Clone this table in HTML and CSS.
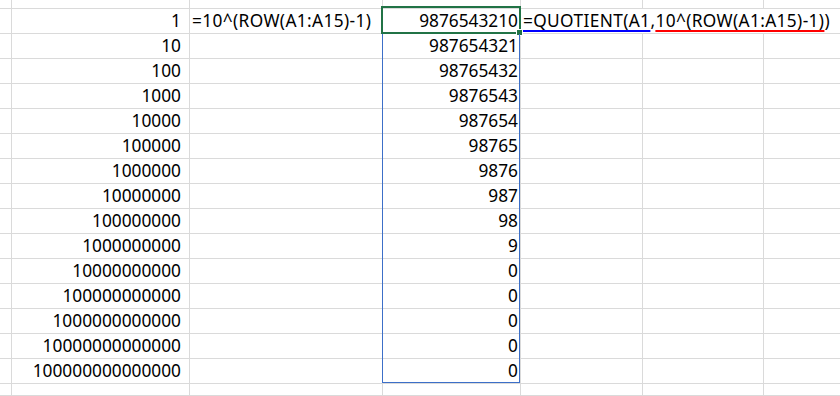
FILE: index.html
```html
<!DOCTYPE html>
<html>
<head>
<meta charset="utf-8">
<link rel="stylesheet" href="styles.css">
</head>
<body>
<div class="sheet">
  <div class="grid">
    <div class="c"></div><div class="c"></div><div class="c"></div><div class="c"></div><div class="c"></div><div class="c"></div><div class="c last"></div>

    <div class="c"></div><div class="c num">1</div><div class="c txt">=10^(ROW(A1:A15)-1)</div><div class="c res">9876543210</div><div class="c txt span3"><span class="ul-blue">=QUOTIENT(A1</span>,<span class="ul-red">10^(ROW(A1:A15)-1)</span>)</div>

    <div class="c"></div><div class="c num">10</div><div class="c"></div><div class="c res">987654321</div><div class="c"></div><div class="c"></div><div class="c last"></div>
    <div class="c"></div><div class="c num">100</div><div class="c"></div><div class="c res">98765432</div><div class="c"></div><div class="c"></div><div class="c last"></div>
    <div class="c"></div><div class="c num">1000</div><div class="c"></div><div class="c res">9876543</div><div class="c"></div><div class="c"></div><div class="c last"></div>
    <div class="c"></div><div class="c num">10000</div><div class="c"></div><div class="c res">987654</div><div class="c"></div><div class="c"></div><div class="c last"></div>
    <div class="c"></div><div class="c num">100000</div><div class="c"></div><div class="c res">98765</div><div class="c"></div><div class="c"></div><div class="c last"></div>
    <div class="c"></div><div class="c num">1000000</div><div class="c"></div><div class="c res">9876</div><div class="c"></div><div class="c"></div><div class="c last"></div>
    <div class="c"></div><div class="c num">10000000</div><div class="c"></div><div class="c res">987</div><div class="c"></div><div class="c"></div><div class="c last"></div>
    <div class="c"></div><div class="c num">100000000</div><div class="c"></div><div class="c res">98</div><div class="c"></div><div class="c"></div><div class="c last"></div>
    <div class="c"></div><div class="c num">1000000000</div><div class="c"></div><div class="c res">9</div><div class="c"></div><div class="c"></div><div class="c last"></div>
    <div class="c"></div><div class="c num">10000000000</div><div class="c"></div><div class="c res">0</div><div class="c"></div><div class="c"></div><div class="c last"></div>
    <div class="c"></div><div class="c num">100000000000</div><div class="c"></div><div class="c res">0</div><div class="c"></div><div class="c"></div><div class="c last"></div>
    <div class="c"></div><div class="c num">1000000000000</div><div class="c"></div><div class="c res">0</div><div class="c"></div><div class="c"></div><div class="c last"></div>
    <div class="c"></div><div class="c num">10000000000000</div><div class="c"></div><div class="c res">0</div><div class="c"></div><div class="c"></div><div class="c last"></div>
    <div class="c"></div><div class="c num">100000000000000</div><div class="c"></div><div class="c res">0</div><div class="c"></div><div class="c"></div><div class="c last"></div>

    <div class="c"></div><div class="c"></div><div class="c"></div><div class="c"></div><div class="c"></div><div class="c"></div><div class="c last"></div>
  </div>
  <div class="sel-active"><div class="fill-handle"></div></div>
  <div class="sel-range"></div>
</div>
</body>
</html>
```
FILE: styles.css
```css
html, body {
  margin: 0;
  padding: 0;
  background: #ffffff;
}
.sheet {
  position: relative;
  width: 840px;
  height: 396px;
  overflow: hidden;
  font-family: "Noto Sans", "Open Sans", sans-serif;
  font-size: 17.3px;
  color: #000;
}
.grid {
  display: grid;
  grid-template-columns: 12px 178px 193px 138px 122px 121px 1fr;
  grid-template-rows: 9px repeat(15, 25px) 1fr;
  height: 396px;
}
.c {
  box-sizing: border-box;
  border-right: 1px solid #dadada;
  border-bottom: 1px solid #dadada;
  line-height: 24px;
  white-space: nowrap;
  overflow: visible;
  min-width: 0;
}
.c.last {
  border-right: none;
}
.num {
  text-align: right;
  padding-right: 8px;
}
.res {
  text-align: right;
  padding-right: 2px;
}
.txt {
  text-align: left;
  padding-left: 2px;
  letter-spacing: 0.37px;
}
.span3 {
  grid-column: span 3;
  border-right: none;
}
.ul-blue {
  text-decoration: underline;
  text-decoration-color: #0000ff;
  text-decoration-thickness: 2px;
  text-underline-offset: 3px;
  text-decoration-skip-ink: none;
}
.ul-red {
  text-decoration: underline;
  text-decoration-color: #ff0000;
  text-decoration-thickness: 2px;
  text-underline-offset: 3px;
  text-decoration-skip-ink: none;
}
.sel-active {
  position: absolute;
  left: 381px;
  top: 6px;
  width: 140px;
  height: 28px;
  box-sizing: border-box;
  border: 2px solid #217346;
}
.fill-handle {
  position: absolute;
  right: -4px;
  bottom: -4px;
  width: 5px;
  height: 5px;
  background: #217346;
  border: 1px solid #fff;
}
.sel-range {
  position: absolute;
  left: 382px;
  top: 34px;
  width: 138px;
  height: 349px;
  box-sizing: border-box;
  border: 1px solid #3c6fc8;
  border-top: none;
}
```
